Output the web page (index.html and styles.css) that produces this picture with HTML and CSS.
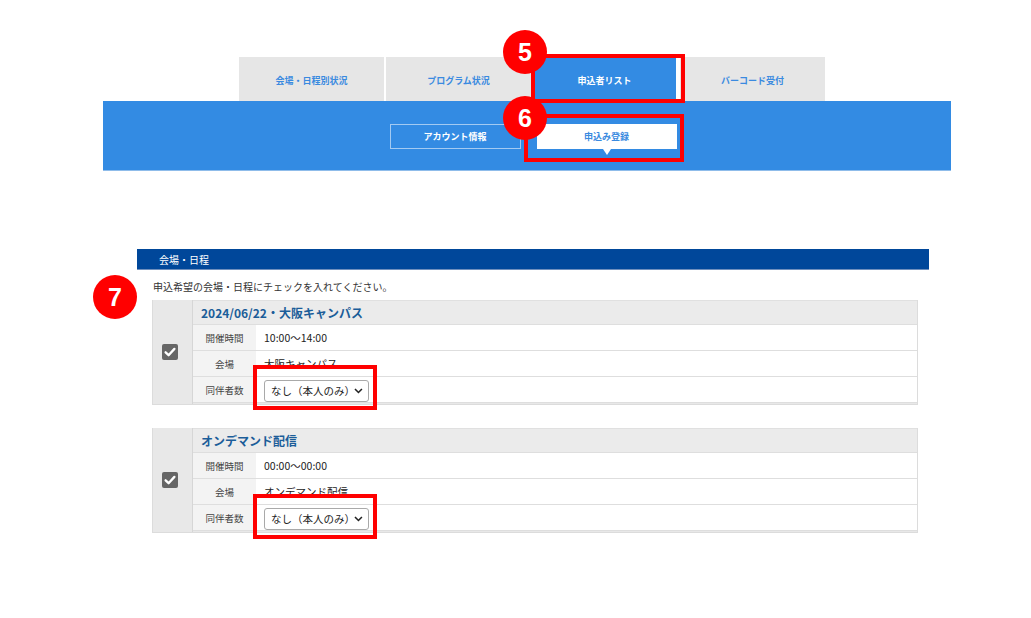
FILE: index.html
```html
<!DOCTYPE html>
<html lang="ja">
<head>
<meta charset="utf-8">
<title>申込み登録</title>
<link rel="stylesheet" href="styles.css">
</head>
<body>
<div class="page">
  <header class="header">
    <nav class="tabs">
      <div class="tab">会場・日程別状況</div>
      <div class="tab">プログラム状況</div>
      <div class="tab tab-active">申込者リスト</div>
      <div class="tab">バーコード受付</div>
    </nav>
    <div class="subbar">
      <div class="subbtn">アカウント情報</div>
      <div class="subbtn subbtn-active">申込み登録</div>
    </div>
  </header>

  <section class="section">
    <h2 class="section-title">会場・日程</h2>
    <p class="lead">申込希望の会場・日程にチェックを入れてください。</p>

    <div class="card">
      <div class="card-check">
        <svg width="16" height="16" viewBox="0 0 16 16"><rect width="16" height="16" rx="2" fill="#666"/><path d="M3.6 8.3 L6.6 11.2 L12.4 4.9" fill="none" stroke="#fff" stroke-width="2.3" stroke-linecap="round" stroke-linejoin="round"/></svg>
      </div>
      <div class="card-body">
        <div class="card-title">2024/06/22・大阪キャンパス</div>
        <div class="row"><div class="label">開催時間</div><div class="value">10:00〜14:00</div></div>
        <div class="row"><div class="label">会場</div><div class="value">大阪キャンパス</div></div>
        <div class="row"><div class="label">同伴者数</div><div class="value"><div class="select">なし（本人のみ）<svg class="chev" width="9" height="6" viewBox="0 0 9 6"><path d="M1 1 L4.5 4.5 L8 1" fill="none" stroke="#222" stroke-width="1.6"/></svg></div></div></div>
      </div>
    </div>

    <div class="card">
      <div class="card-check">
        <svg width="16" height="16" viewBox="0 0 16 16"><rect width="16" height="16" rx="2" fill="#666"/><path d="M3.6 8.3 L6.6 11.2 L12.4 4.9" fill="none" stroke="#fff" stroke-width="2.3" stroke-linecap="round" stroke-linejoin="round"/></svg>
      </div>
      <div class="card-body">
        <div class="card-title">オンデマンド配信</div>
        <div class="row"><div class="label">開催時間</div><div class="value">00:00〜00:00</div></div>
        <div class="row"><div class="label">会場</div><div class="value">オンデマンド配信</div></div>
        <div class="row"><div class="label">同伴者数</div><div class="value"><div class="select">なし（本人のみ）<svg class="chev" width="9" height="6" viewBox="0 0 9 6"><path d="M1 1 L4.5 4.5 L8 1" fill="none" stroke="#222" stroke-width="1.6"/></svg></div></div></div>
      </div>
    </div>
  </section>

  <!-- annotations -->
  <div class="mark mark-tab"></div>
  <div class="badge badge-5">5</div>
  <div class="mark mark-sub"></div>
  <div class="badge badge-6">6</div>
  <div class="badge badge-7">7</div>
  <div class="mark mark-sel1"></div>
  <div class="mark mark-sel2"></div>
</div>
</body>
</html>
```

FILE: styles.css
```css
* { box-sizing: border-box; }
html, body { margin: 0; padding: 0; background: #fff; }
body {
  font-family: "Noto Sans CJK JP", "Noto Sans", sans-serif;
  color: #333;
  width: 1031px;
  height: 618px;
  overflow: hidden;
}
.page { position: relative; width: 1031px; height: 618px; padding-top: 57px; }

.header { width: 848px; margin-left: 103px; }
.tabs { display: flex; gap: 2px; margin-left: 136px; height: 44px; }
.tab {
  width: 145px;
  background: #e6e6e6;
  color: #3a8ae0;
  font-size: 9px;
  font-weight: bold;
  display: flex; align-items: center; justify-content: center;
  padding-top: 2px;
}
.tab-active { background: #338be3; color: #fff; border-right: 2px solid #fff; }

.subbar {
  background: #338be3;
  height: 70px;
  display: flex;
  justify-content: center;
  gap: 16px;
  padding-top: 23px;
  padding-left: 12px;
  border-bottom: 1px solid #8fbcea;
}
.subbtn {
  position: relative;
  width: 131px; height: 25px;
  border: 1px solid rgba(255,255,255,0.55);
  color: #fff;
  font-size: 9px; font-weight: bold;
  display: flex; align-items: center; justify-content: center;
}
.subbtn-active { width: 140px; background: #fff; color: #3a8ae0; border-color: #fff; }
.subbtn-active::after {
  content: "";
  position: absolute;
  left: 50%; top: 24px;
  margin-left: -4px;
  border-left: 4px solid transparent;
  border-right: 4px solid transparent;
  border-top: 6px solid #fff;
}

.section { width: 792px; margin: 78px 0 0 137px; }
.section-title {
  margin: 0;
  height: 21px;
  background: #00479a;
  border-bottom: 1px solid #6f8fbd;
  color: #fff;
  font-size: 10px; font-weight: normal;
  padding-left: 22px;
  line-height: 21px;
}
.lead { margin: 10px 0 6px 16px; font-size: 10px; line-height: 14px; color: #333; }

.card {
  display: flex;
  width: 766px;
  margin-left: 15px;
  margin-bottom: 23px;
  background: #e8e8e8;
  border: 1px solid #dcdcdc;
  border-top: none;
}
.card-check {
  width: 40px;
  display: flex; align-items: center; justify-content: center;
  border-right: 1px solid #d6d6d6;
}
.card-check svg { display: block; margin-left: -6px; }
.card-body { flex: 1; display: flex; flex-direction: column; padding-bottom: 1px; }
.card-title {
  height: 24px;
  background: #ebebeb;
  color: #1b5d99;
  font-size: 12px; font-weight: bold;
  padding-left: 8px;
  line-height: 24px;
  border-top: 1px solid #e0e0e0;
}
.row { display: flex; height: 26px; border-top: 1px solid #dedede; background: #fff; }
.row:last-child { height: 27px; border-bottom: 1px solid #dedede; }
.label {
  width: 63px;
  background: #f3f3f3;
  font-size: 9.5px; color: #444;
  display: flex; align-items: center; justify-content: center;
}
.value {
  flex: 1;
  font-size: 10.5px; color: #222;
  display: flex; align-items: center;
  padding-left: 8px;
}
.select {
  width: 105px; height: 22px;
  border: 1px solid #a9a9a9;
  border-radius: 3px;
  background: #fff;
  font-size: 10.5px; color: #222;
  display: flex; align-items: center;
  padding-left: 6px;
  margin-top: 2px;
}
.chev { margin-left: auto; margin-right: 5px; }

/* annotations */
.mark { position: absolute; border: 4px solid #f00; }
.mark-tab { left: 531px; top: 54px; width: 154px; height: 49px; }
.mark-sub { left: 524px; top: 114px; width: 160px; height: 48px; }
.mark-sel1 { left: 253px; top: 365px; width: 124px; height: 45px; }
.mark-sel2 { left: 253px; top: 494px; width: 124px; height: 45px; }
.badge {
  position: absolute;
  width: 44px; height: 44px;
  border-radius: 50%;
  background: #f00;
  color: #fff;
  font-family: "Liberation Sans", Arial, sans-serif;
  font-weight: bold;
  font-size: 25px;
  display: flex; align-items: center; justify-content: center;
}
.badge-5 { left: 503px; top: 30px; }
.badge-6 { left: 503px; top: 96px; }
.badge-7 { left: 93px; top: 275px; }
```
